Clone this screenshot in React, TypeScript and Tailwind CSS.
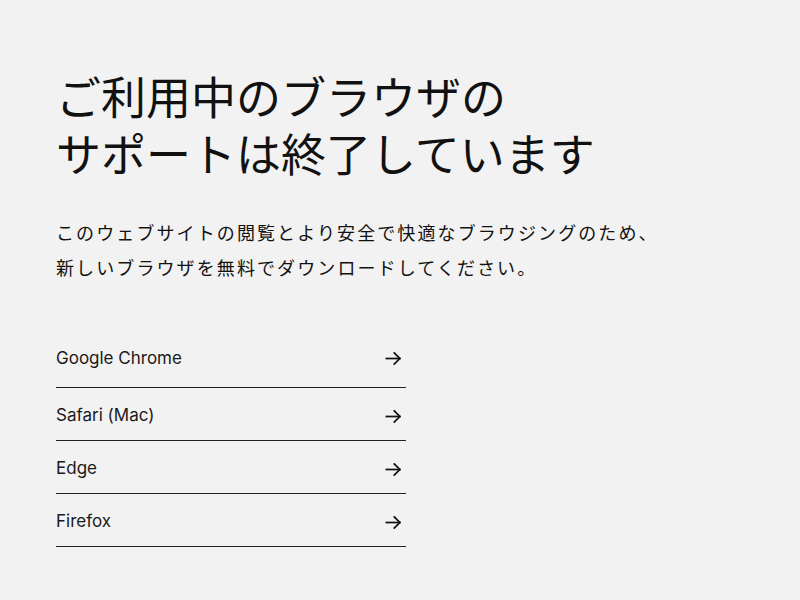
import React from "react";

const browsers = ["Google Chrome", "Safari (Mac)", "Edge", "Firefox"];

function Arrow() {
  return (
    <svg width="19" height="19" viewBox="0 0 24 24" fill="none" stroke="#111" strokeWidth="2.2" strokeLinecap="square" strokeLinejoin="miter">
      <path d="M3 12h17" />
      <path d="M13 5l7 7-7 7" />
    </svg>
  );
}

export default function App() {
  return (
    <div
      className="min-h-[600px] w-full bg-[#f2f2f2] text-[#111] pl-[56px] pt-[67px]"
      style={{ fontFamily: "Inter, 'Noto Sans CJK JP', sans-serif" }}
    >
      <h1 className="text-[45px] leading-[57px] font-normal" style={{ fontFamily: "'Noto Sans CJK JP', sans-serif" }}>
        ご利用中のブラウザの
        <br />
        サポートは終了しています
      </h1>
      <p
        className="mt-[34px] text-[18px] leading-[35px] tracking-[2.1px]"
        style={{ fontFamily: "'Noto Sans CJK JP', sans-serif" }}
      >
        このウェブサイトの閲覧とより安全で快適なブラウジングのため、
        <br />
        新しいブラウザを無料でダウンロードしてください。
      </p>
      <ul className="mt-[49px] w-[350px]">
        {browsers.map((b, i) => (
          <li
            key={b}
            className={`flex items-center justify-between border-b border-[#222] pr-[3px] ${i === 0 ? "h-[54px] pb-[4px]" : "h-[53px] pt-[4px]"}`}
          >
            <span className="text-[17px] text-[#1a1a1a]">{b}</span>
            <Arrow />
          </li>
        ))}
      </ul>
    </div>
  );
}
